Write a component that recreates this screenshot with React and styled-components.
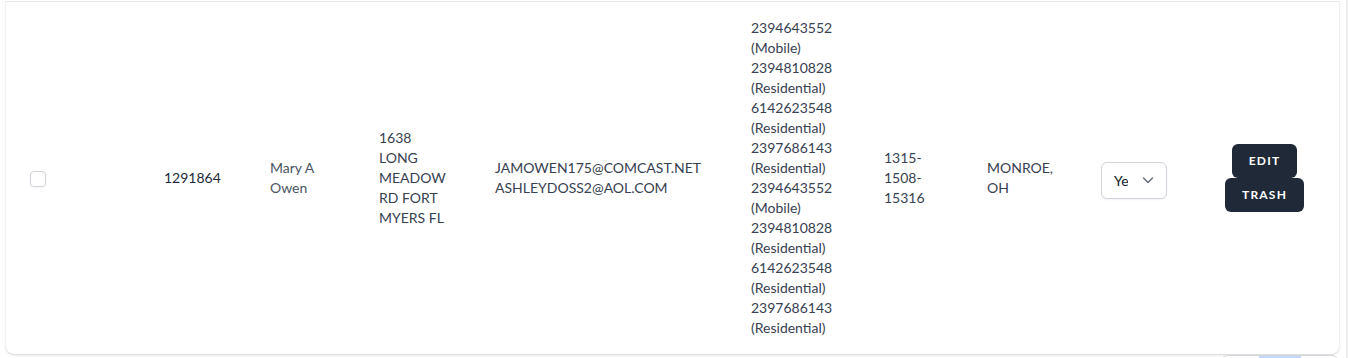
import React from 'react';
import styled, { createGlobalStyle } from 'styled-components';

const GlobalStyle = createGlobalStyle`
  html, body {
    margin: 0;
    padding: 0;
    background: #fff;
    overflow: hidden;
  }
  body {
    font-family: Lato, "Open Sans", "Liberation Sans", sans-serif;
    -webkit-font-smoothing: antialiased;
  }
`;

const Page = styled.div`
  display: flex;
  width: 1349px;
  height: 358px;
  padding-left: 6px;
  box-sizing: border-box;
  overflow: hidden;
`;

const Main = styled.div`
  width: 1333px;
  flex-shrink: 0;
  display: flex;
  flex-direction: column;
`;

const Track = styled.div`
  width: 2px;
  flex-shrink: 0;
  margin-left: 7px;
  background: #efefef;
`;

const Card = styled.div`
  flex-shrink: 0;
  background: #fff;
  padding-top: 1px;
  border-radius: 0 0 8px 8px;
  box-shadow: 0 1px 3px rgba(0, 0, 0, 0.12), 0 1px 2px rgba(0, 0, 0, 0.07);
  overflow: hidden;
`;

const Table = styled.table`
  width: 100%;
  table-layout: fixed;
  border-collapse: collapse;
`;

const Col = styled.col`
  width: ${p => p.$w}px;
`;

const Row = styled.tr`
  border-top: 1px solid #e5e7eb;
`;

const Cell = styled.td`
  padding: 16px 24px;
  vertical-align: middle;
  font-size: 14px;
  line-height: 20px;
  color: ${p => p.$tone || '#374151'};
`;

const Line = styled.div`
  white-space: nowrap;
`;

const Check = styled.input`
  appearance: none;
  display: block;
  margin: 2px 0 0;
  width: 16px;
  height: 16px;
  border: 1px solid #d1d5db;
  border-radius: 4px;
  background: #fff;
  box-shadow: 0 1px 2px rgba(0, 0, 0, 0.05);
`;

const SelectBox = styled.div`
  position: relative;
  width: 66px;
  margin-top: 4px;
`;

const Select = styled.select`
  appearance: none;
  width: 66px;
  height: 37px;
  padding: 0 38px 0 12px;
  border: 1px solid #d1d5db;
  border-radius: 6px;
  background: #fff;
  font-family: inherit;
  font-size: 14px;
  color: #111827;
  box-shadow: 0 1px 2px rgba(0, 0, 0, 0.05);
`;

const Chevron = styled.svg`
  position: absolute;
  right: 9px;
  top: 8px;
  pointer-events: none;
`;

const Actions = styled.div`
  display: inline-flex;
  flex-direction: column;
  align-items: center;
`;

const Button = styled.button`
  display: inline-flex;
  align-items: center;
  padding: 8px 16px;
  background: #1f2937;
  border: 1px solid transparent;
  border-radius: 6px;
  font-family: inherit;
  font-weight: 700;
  font-size: 12px;
  line-height: 16px;
  letter-spacing: 0.1em;
  text-transform: uppercase;
  color: #fff;
  cursor: pointer;
`;

const Pager = styled.div`
  align-self: flex-end;
  display: flex;
  flex-shrink: 0;
  margin-top: 1px;
  margin-right: 1px;
  border: 1px solid #d1d5db;
  border-radius: 6px;
  overflow: hidden;
`;

const PageItem = styled.span`
  width: ${p => p.$w}px;
  height: 36px;
  background: ${p => (p.$active ? '#c3dafe' : '#fff')};
`;

const phones = [
  ['2394643552', 'Mobile'],
  ['2394810828', 'Residential'],
  ['6142623548', 'Residential'],
  ['2397686143', 'Residential'],
  ['2394643552', 'Mobile'],
  ['2394810828', 'Residential'],
  ['6142623548', 'Residential'],
  ['2397686143', 'Residential'],
];

const widths = [134, 106, 109, 116, 256, 133, 103, 114, 124, 138];

export default function App() {
  return (
    <>
      <GlobalStyle />
      <Page>
        <Main>
          <Card>
            <Table>
              <colgroup>
                {widths.map((w, i) => (
                  <Col key={i} $w={w} />
                ))}
              </colgroup>
              <tbody>
                <Row>
                  <Cell>
                    <Check type="checkbox" />
                  </Cell>
                  <Cell $tone="#1f2937">1291864</Cell>
                  <Cell $tone="#4b5563">
                    <Line>Mary A</Line>
                    <Line>Owen</Line>
                  </Cell>
                  <Cell>
                    <Line>1638</Line>
                    <Line>LONG</Line>
                    <Line>MEADOW</Line>
                    <Line>RD FORT</Line>
                    <Line>MYERS FL</Line>
                  </Cell>
                  <Cell>
                    <Line>JAMOWEN175@COMCAST.NET</Line>
                    <Line>ASHLEYDOSS2@AOL.COM</Line>
                  </Cell>
                  <Cell>
                    {phones.map(([num, kind], i) => (
                      <React.Fragment key={i}>
                        <Line>{num}</Line>
                        <Line>({kind})</Line>
                      </React.Fragment>
                    ))}
                  </Cell>
                  <Cell>
                    <Line>1315-</Line>
                    <Line>1508-</Line>
                    <Line>15316</Line>
                  </Cell>
                  <Cell>
                    <Line>MONROE,</Line>
                    <Line>OH</Line>
                  </Cell>
                  <Cell>
                    <SelectBox>
                      <Select defaultValue="Yes">
                        <option>Yes</option>
                        <option>No</option>
                      </Select>
                      <Chevron width="20" height="20" viewBox="0 0 20 20" fill="none">
                        <path d="M5.5 8l4.5 4.5L14.5 8" stroke="#6b7280" strokeWidth="1.6" strokeLinecap="round" strokeLinejoin="round" />
                      </Chevron>
                    </SelectBox>
                  </Cell>
                  <Cell>
                    <Actions>
                      <Button>Edit</Button>
                      <Button>Trash</Button>
                    </Actions>
                  </Cell>
                </Row>
              </tbody>
            </Table>
          </Card>
          <Pager>
            <PageItem $w={36} />
            <PageItem $w={42} $active />
            <PageItem $w={36} />
          </Pager>
        </Main>
        <Track />
      </Page>
    </>
  );
}
